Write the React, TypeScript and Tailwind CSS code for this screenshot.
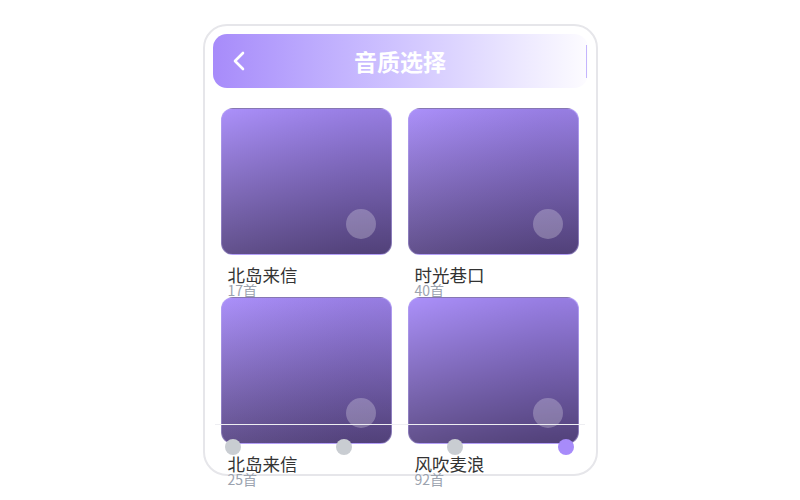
const albums = [
  { title: '北岛来信', count: '17首' },
  { title: '时光巷口', count: '40首' },
  { title: '北岛来信', count: '25首' },
  { title: '风吹麦浪', count: '92首' },
];

const stops = [false, false, false, true];

const App = () => {
  return (
    <div
      className="w-[800px] h-[500px] bg-white flex justify-center pt-6 overflow-hidden"
      style={{ fontFamily: '"Noto Sans CJK SC", "Noto Sans", sans-serif' }}
    >
      <div className="relative w-[395px] h-[452px] border-2 border-[#e6e6ea] rounded-[24px] p-2">
        <div className="h-[54px] rounded-[14px] bg-linear-to-r from-[#a78bfa] to-[#fdfcff] flex items-center">
          <div className="w-[44px] pl-5 flex items-center">
            <svg width="12" height="20" viewBox="0 0 12 20" fill="none">
              <path d="M10 2 L2 10 L10 18" stroke="white" strokeWidth="2.6" strokeLinecap="round" strokeLinejoin="round" />
            </svg>
          </div>
          <h1 className="flex-1 text-center text-white font-bold text-[23px] leading-none">音质选择</h1>
          <div className="w-[44px] flex justify-end pr-[1px]">
            <div className="w-px h-[33px] bg-[#c4b5fd]" />
          </div>
        </div>

        <div className="grid grid-cols-2 gap-x-4 pl-2 pr-[9px] mt-5">
          {albums.map((a, i) => (
            <div key={i}>
              <div className="relative h-[147px] rounded-[12px] bg-linear-to-b from-[#a78bfa] to-[#5a4886] border border-[#c9bdf5]/40">
                <div className="absolute inset-0 rounded-[11px] bg-linear-to-r from-white/5 to-black/10" />
                <div className="absolute right-[15px] bottom-[15px] w-[30px] h-[30px] rounded-full bg-white/25" />
              </div>
              <div className="pl-[7px] mt-[11px] text-[17.5px] leading-[18px] text-[#333]">{a.title}</div>
              <div className="pl-[7px] text-[14px] leading-[13px] text-[#9ca3af]">{a.count}</div>
            </div>
          ))}
        </div>

        <div className="absolute left-[10px] right-[11px] top-[398px] h-px bg-[#eeeef2]" />
        <div className="absolute left-[20px] right-[21px] top-[413px] flex justify-between">
          {stops.map((on, i) => (
            <div
              key={i}
              className={on ? 'w-4 h-4 rounded-full bg-[#a78bfa]' : 'w-4 h-4 rounded-full bg-[#c9cdd2]'}
            />
          ))}
        </div>
      </div>
    </div>
  );
};

export default App;
